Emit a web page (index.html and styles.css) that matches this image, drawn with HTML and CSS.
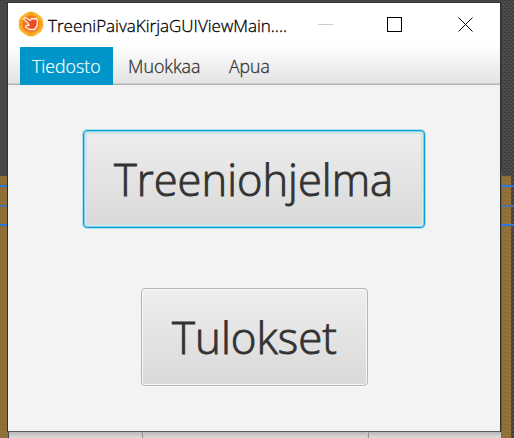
FILE: index.html
```html
<!DOCTYPE html>
<html lang="fi">
<head>
<meta charset="utf-8">
<title>TreeniPaivaKirja</title>
<link rel="stylesheet" href="styles.css">
</head>
<body>
<svg class="backdrop" width="514" height="438" aria-hidden="true">
  <defs>
    <pattern id="weave" width="4" height="4" patternUnits="userSpaceOnUse">
      <rect width="4" height="4" fill="#484848"/>
      <path d="M0 0h2v1H0zM2 2h2v1H2z" fill="#3c3c3c"/>
      <path d="M1 1h1v1H1zM3 3h1v1H3z" fill="#565656"/>
    </pattern>
    <pattern id="wood" width="4" height="4" patternUnits="userSpaceOnUse">
      <rect width="4" height="4" fill="#92713a"/>
      <path d="M0 0h2v1H0zM2 2h2v1H2z" fill="#866633"/>
      <path d="M1 1h1v1H1zM3 3h1v1H3z" fill="#98763c"/>
    </pattern>
    <linearGradient id="under" x2="0" y2="1"><stop stop-color="#b8b8b8"/><stop offset="1" stop-color="#dcdcdc"/></linearGradient>
  </defs>
  <rect width="514" height="438" fill="url(#weave)"/>
  <rect y="176" width="8" height="262" fill="url(#wood)"/>
  <rect x="500" y="176" width="11" height="262" fill="url(#wood)"/>
  <rect x="500" y="3" width="2" height="429" fill="#222" opacity=".3"/>
  <path d="M0 186h7M501 186h13M0 225h7M501 225h13" stroke="#2878e0" stroke-width="2"/>
  <path d="M0 206h7M501 206h13" stroke="#4a72a5" stroke-width="2"/>
  <path d="M501.500 172v14M501.500 201v10M501.500 225v14" stroke="#2468b8"/>
  <rect x="9" y="432" width="492" height="6" fill="url(#under)"/>
  <path d="M142.500 432v6M368.500 432v6" stroke="#929292"/>
  <path d="M143.500 432v6M367.500 432v6" stroke="#c8c8c8"/>
</svg>
<main class="window">
  <header class="titlebar">
    <svg class="logo" width="26" height="26" viewBox="0 0 26 26" aria-hidden="true">
      <path d="M8 2Q13-1 18 2L22 5Q26 8 25 13Q26 18 21 22L18 24Q13 27 8 24L4 21Q0 18 1 13Q0 8 4 5Z" fill="#fbb52b"/>
      <path d="M13 1L21 8L25 13L21 19L13 25L5 19L1 13L5 7Z" fill="#f9a01b"/>
      <circle cx="13" cy="13" r="8.500" fill="#f4762a"/>
      <path d="M5.500 8L7.500 6.500L12 9.500L14 7.500L16 8L18 7.500L19.500 9.500L19 15L16.500 18.500L11.500 18.500L7.500 16L8.500 14.500L11 14.500L10 12Z" fill="#ee4b23" stroke="#fff0df" stroke-width="1.300" stroke-linejoin="round"/>
    </svg>
    <h1 class="title"><span>TreeniPaivaKirjaGUIViewMain....</span></h1>
    <svg class="controls" width="156" height="16" viewBox="0 0 156 16" shape-rendering="crispEdges" aria-hidden="true">
      <path d="M0 7.500h15" stroke="#ccc"/>
      <rect x="69.500" y=".5" width="14" height="14" fill="none" stroke="#000"/>
      <path d="M140.500 .5l14 14M154.500 .5l-14 14" stroke="#000" shape-rendering="auto"/>
    </svg>
  </header>
  <nav class="menubar">
    <a class="item active"><span class="t1">Tiedosto</span></a>
    <a class="item"><span class="t2">Muokkaa</span></a>
    <a class="item"><span class="t3">Apua</span></a>
  </nav>
  <section class="content">
    <button class="btn focused"><span>Treeniohjelma</span></button>
    <button class="btn results"><span>Tulokset</span></button>
  </section>
</main>
</body>
</html>
```
FILE: styles.css
```css
* { box-sizing: border-box; }
body { margin: 0; width: 514px; height: 438px; overflow: hidden; background: #464646; font-family: "Open Sans", "Noto Sans", sans-serif; }
.backdrop { position: absolute; left: 0; top: 0; z-index: -1; }
.window { width: 494px; height: 430px; margin: 2px 0 0 7px; border: 1px solid #303030; border-bottom-color: #5b5b5f; background: #f3f3f3; display: flex; flex-direction: column; }
.titlebar { height: 44px; background: #fff; display: flex; align-items: flex-start; flex: none; }
.logo { margin: 8px 0 0 10px; flex: none; }
.title { margin: 11px 0 0 4px; width: 262px; height: 24px; font-size: 17.3px; line-height: 24px; font-weight: 300; -webkit-text-stroke: .3px; color: #000; white-space: nowrap; }
span { display: inline-block; transform-origin: 0 50%; white-space: nowrap; }
.title span { transform: scaleX(.985); }
.controls { margin: 14px 0 0 8px; flex: none; }
.menubar { height: 38px; flex: none; display: flex; padding-left: 12px; background: linear-gradient(#fdfdfd, #e3e3e3); border-bottom: 1px solid #b2b2b2; box-shadow: inset 0 -1px #ccc; }
.item { height: 38px; padding: 7px 0 0 12px; font-size: 18px; font-weight: 300; -webkit-text-stroke: .3px; line-height: 24px; color: #333; width: 101px; }
.item.active { width: 93px; background: #0096c9; color: #fff; margin-right: 3px; -webkit-text-stroke-width: .2px; }
.item .t1 { transform: scaleX(.985); }
.item .t2 { transform: scaleX(.99); }
.item .t3 { transform: scaleX(.98); }
.content { flex: 1; display: flex; flex-direction: column; align-items: center; padding-top: 45px; gap: 60px; }
.btn { width: 342px; height: 98px; flex: none; padding: 0 0 0 30px; border: 1px solid #b5b5b5; border-radius: 4px; background: linear-gradient(#eee, #d9d9d9); box-shadow: inset 0 0 0 1px #f7f7f7, 0 1px #f9f9f9; color: #333; font: 300 45px/96px "Open Sans", "Noto Sans", sans-serif; -webkit-text-stroke: .9px; text-align: left; }
.btn span { transform: scaleX(.966); }
.focused { border-color: #039ed3; box-shadow: 0 0 0 1px #b0dfee, inset 0 0 0 1px #82cfe6, inset 0 0 0 2px #dce9eb, inset 0 0 0 3px #cbe1e6; }
.results { width: 227px; margin-left: 1px; }
.results span { transform: scaleX(.975); }
```
